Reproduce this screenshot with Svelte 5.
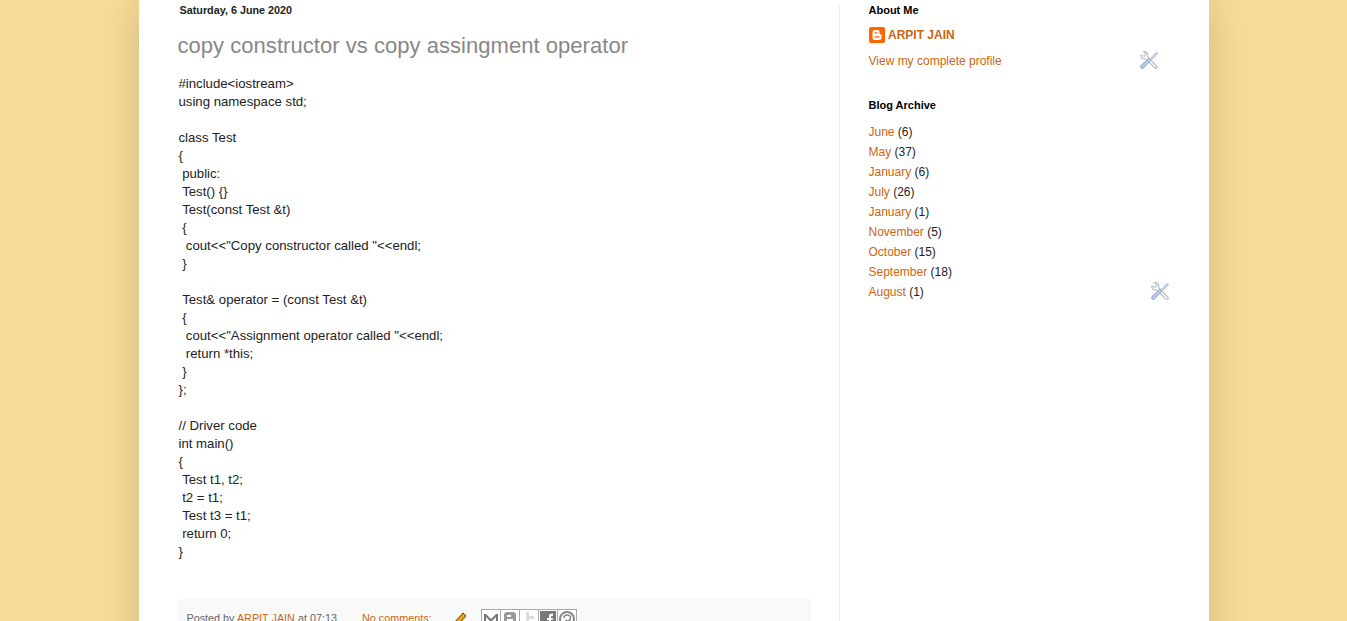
<script>
    const postBody = `#include<iostream>
using namespace std;

class Test
{
\u00a0public:
\u00a0Test() {}
\u00a0Test(const Test &t)
\u00a0{
\u00a0\u00a0cout<<"Copy constructor called "<<endl;
\u00a0}

\u00a0Test& operator = (const Test &t)
\u00a0{
\u00a0\u00a0cout<<"Assignment operator called "<<endl;
\u00a0\u00a0return *this;
\u00a0}
};

// Driver code
int main()
{
\u00a0Test t1, t2;
\u00a0t2 = t1;
\u00a0Test t3 = t1;
\u00a0return 0;
}`;

    const archive = [
        ['June', 6],
        ['May', 37],
        ['January', 6],
        ['July', 26],
        ['January', 1],
        ['November', 5],
        ['October', 15],
        ['September', 18],
        ['August', 1]
    ];
</script>

{#snippet tools()}
    <svg class="tools" width="20" height="20" viewBox="0 0 20 20">
        <path d="M2 5 C1 8 4 9.500 6 8.500 L16 18 C17 19 19 18 18 16.500 L8.500 6.500 C9.500 4 8 1 4.500 1.500 L7 4 L5 6.500 Z" fill="#fff" stroke="#bdc0c5" stroke-width="1.200" />
        <path d="M12 8 L17 2.500 L18.500 3.500 L13.500 9 Z" fill="#dbe4f0" stroke="#9fb0c9" />
        <path d="M2 15.500 L9.500 8.500 C10.500 8 12 9.500 11.500 10.500 L4.500 18 C3 19.500 0.500 17 2 15.500 Z" fill="#b9cce6" stroke="#8aa0c0" />
    </svg>
{/snippet}

<div class="page">
    <div class="content">
        <main class="main-col">
            <h2 class="date">Saturday, 6 June 2020</h2>
            <h3 class="title">copy constructor vs copy assingment operator</h3>
            <div class="post-body">{postBody}</div>
            <div class="post-footer">
                <span>Posted by <a href="#a">ARPIT JAIN</a> at 07:13</span>
                <a class="comments" href="#c">No comments:</a>
                <svg class="pencil" width="18" height="18" viewBox="0 0 18 18">
                    <path d="M3 14 L13 3 L16 6 L6 17 Z" fill="#e8a317" stroke="#5a3d05" stroke-width="1" />
                    <path d="M3 14 L1.500 18 L6 17 Z" fill="#f4d9a0" stroke="#5a3d05" stroke-width="0.800" />
                </svg>
                <div class="share">
                    <span class="btn">
                        <svg width="18" height="18" viewBox="0 0 18 18"><path d="M2 4 H4 L9 9 L14 4 H16 V16 H14 V7 L9 12 L4 7 V16 H2 Z" fill="#777" /></svg>
                    </span>
                    <span class="btn">
                        <svg width="18" height="18" viewBox="0 0 18 18"><rect x="3" y="2" width="12" height="15" rx="3" fill="#999" /><rect x="6" y="5" width="4" height="2" fill="#fff" /><rect x="6" y="9" width="6" height="2" fill="#fff" /></svg>
                    </span>
                    <span class="btn">
                        <svg width="18" height="18" viewBox="0 0 18 18"><path d="M6 2 H9 V6 H14 V9 H9 V12 H14 V15 H8 Q6 15 6 13 Z" fill="#ddd" /></svg>
                    </span>
                    <span class="btn">
                        <svg width="18" height="18" viewBox="0 0 18 18"><rect x="1" y="1" width="16" height="16" fill="#777" /><path d="M10 17 V10 H8 V8 H10 V6 Q10 3.500 13 3.500 H14 V6 H13 Q12 6 12 7 V8 H14 L13.700 10 H12 V17 Z" fill="#fff" /></svg>
                    </span>
                    <span class="btn">
                        <svg width="18" height="18" viewBox="0 0 18 18"><circle cx="9" cy="9" r="7" fill="none" stroke="#888" stroke-width="2" /><path d="M9 5 Q12.500 5 12.500 8 Q12.500 11 9.500 11 L8 10.500 L7 15 M6 8 Q6 5 9 5" fill="none" stroke="#888" stroke-width="1.500" /></svg>
                    </span>
                </div>
            </div>
        </main>

        <aside class="sidebar">
            <section class="widget about">
                <h2>About Me</h2>
                <a class="author" href="#p">
                    <svg width="16" height="16" viewBox="0 0 16 16">
                        <rect width="16" height="16" rx="2" fill="#f60" />
                        <path d="M5.500 3 H8.500 Q10.500 3 10.500 5 V6.500 Q10.500 7.300 11.300 7.300 Q12.500 7.300 12.500 8.500 V10.500 Q12.500 13 10 13 H5.500 Q3.500 13 3.500 11 V5 Q3.500 3 5.500 3 Z" fill="#fff" />
                        <path d="M6 5.800 H8 M6 9.800 H10" stroke="#f60" stroke-width="1.300" stroke-linecap="round" />
                    </svg>
                    ARPIT JAIN
                </a>
                <a class="profile" href="#p">View my complete profile</a>
                <span class="edit-profile">{@render tools()}</span>
            </section>

            <section class="widget archive">
                <h2>Blog Archive</h2>
                <ul>
                    {#each archive as [month, count]}
                        <li><a href="#m">{month}</a> ({count})</li>
                    {/each}
                </ul>
                <span class="edit-archive">{@render tools()}</span>
            </section>
        </aside>
    </div>
</div>

<style>
    :global(body) {
        margin: 0;
        height: 100vh;
        overflow: hidden;
        background: #f7db96;
        font-family: "Liberation Sans", Arial, sans-serif;
        color: #222;
    }

    a {
        color: #c61;
        text-decoration: none;
    }

    .page {
        display: flex;
        justify-content: center;
        height: 621px;
        overflow: hidden;
    }

    .content {
        display: flex;
        width: 1070px;
        height: 700px;
        padding-top: 4px;
        box-sizing: border-box;
        background: #fff;
        box-shadow: 0 0 40px rgba(0, 0, 0, 0.15);
    }

    .main-col {
        width: 701px;
        height: 696px;
        box-sizing: border-box;
        padding: 0 28px 0 39px;
        border-right: 1px solid #eee;
    }

    .date {
        margin: 0 0 0 2px;
        font-size: 10.8px;
        line-height: 13px;
        font-weight: bold;
    }

    .title {
        margin: 16px 0 0;
        font-size: 22px;
        line-height: 26px;
        font-weight: normal;
        letter-spacing: 0.04px;
        color: #888;
    }

    .post-body {
        margin: 16px 0 0 1px;
        font-size: 13.2px;
        line-height: 18px;
        white-space: pre-wrap;
        color: #222;
    }

    .post-footer {
        display: flex;
        align-items: flex-start;
        height: 60px;
        margin: 38px 0 0 -1px;
        padding: 11px 10px 10px;
        box-sizing: border-box;
        background: #f9f9f9;
        font-size: 10.8px;
        line-height: 17px;
        color: #666;
    }

    .comments {
        margin-left: 25px;
    }

    .pencil {
        margin: 0 0 0 18px;
    }

    .share {
        display: flex;
        margin: -1px 0 0 13px;
    }

    .btn {
        display: block;
        width: 18px;
        height: 18px;
        border: 1px solid #aaa;
        background: #fff;
        margin-right: -1px;
    }

    .btn svg {
        display: block;
    }

    .sidebar {
        flex: 1;
        padding-left: 29px;
    }

    .widget {
        position: relative;
        font-size: 12px;
    }

    .widget h2 {
        margin: 0;
        font-size: 11px;
        line-height: 13px;
        font-weight: bold;
        color: #000;
    }

    .author {
        display: flex;
        align-items: center;
        gap: 3.500px;
        margin-top: 10px;
        font-weight: bold;
        line-height: 16px;
    }

    .profile {
        display: block;
        margin-top: 10px;
        line-height: 16px;
    }

    .edit-profile {
        position: absolute;
        left: 270px;
        top: 46px;
    }

    .archive {
        margin-top: 30px;
    }

    .archive ul {
        list-style: none;
        margin: 10px 0 0;
        padding: 0;
    }

    .archive li {
        height: 20px;
        line-height: 20px;
    }

    .edit-archive {
        position: absolute;
        left: 281px;
        bottom: 1px;
    }

    .tools {
        display: block;
    }
</style>
